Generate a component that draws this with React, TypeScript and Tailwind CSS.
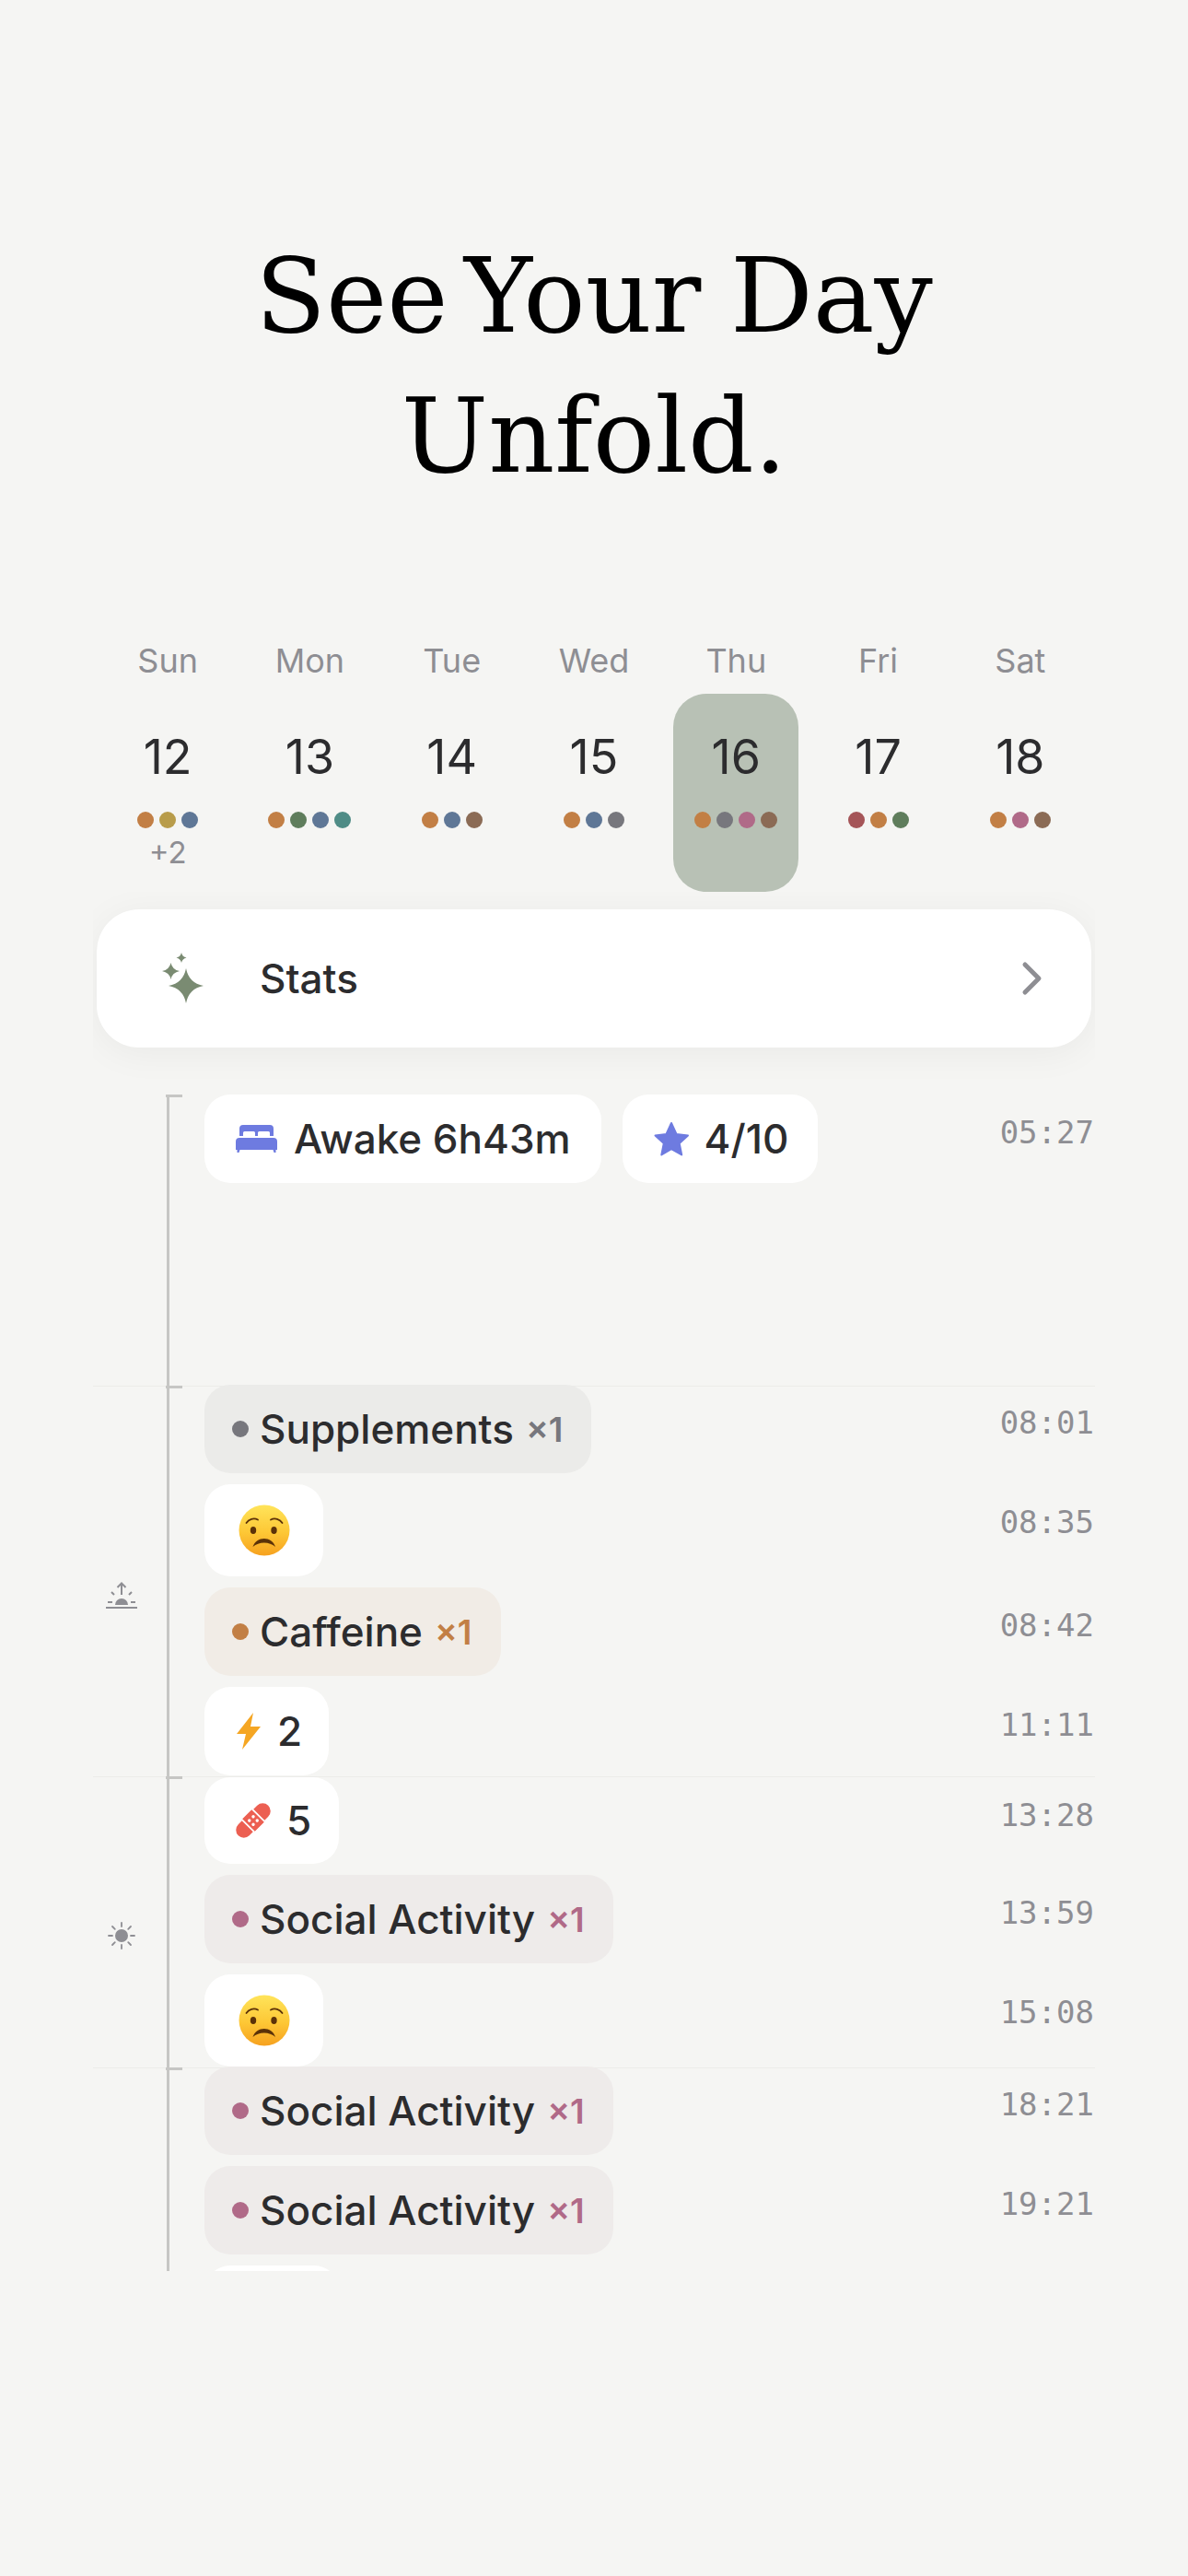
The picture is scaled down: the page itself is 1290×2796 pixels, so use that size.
const days = [
  { label: "Sun", date: 12, dots: ["#c27f45", "#b89c4a", "#5f7796"], more: "+2" },
  { label: "Mon", date: 13, dots: ["#c27f45", "#5f7d5c", "#5f7796", "#4f8c86"] },
  { label: "Tue", date: 14, dots: ["#c27f45", "#5f7796", "#8b6b55"] },
  { label: "Wed", date: 15, dots: ["#c27f45", "#5f7796", "#77777d"] },
  { label: "Thu", date: 16, dots: ["#c27f45", "#77777d", "#b06a88", "#8b6b55"], active: true },
  { label: "Fri", date: 17, dots: ["#a55558", "#c27f45", "#5f7d5c"] },
  { label: "Sat", date: 18, dots: ["#c27f45", "#b06a88", "#8b6b55"] },
];

function Sparkles() {
  return (
    <svg width="46" height="56" viewBox="0 0 46 56" fill="#7a8b72">
      <path d="M26 17Q29 33 45 36 29 39 26 55 23 39 7 36 23 33 26 17z" />
      <path d="M9.500 11Q11 18.500 19 20 11 21.500 9.500 29 8 21.500 0 20 8 18.500 9.500 11z" />
      <path d="M21 0Q22 4.500 26.500 5.500 22 6.500 21 11 20 6.500 15.500 5.500 20 4.500 21 0z" />
    </svg>
  );
}

function Bed() {
  return (
    <svg width="45" height="30" viewBox="0 0 45 30" fill="#6e7be0">
      <path d="M8 0h29a4 4 0 0 1 4 4v8h-4V8.500A1.500 1.500 0 0 0 35.500 7h-10A1.500 1.500 0 0 0 24 8.500V12h-3V8.500A1.500 1.500 0 0 0 19.500 7h-10A1.500 1.500 0 0 0 8 8.500V12H4V4a4 4 0 0 1 4-4z" />
      <path d="M4 14h37a4 4 0 0 1 4 4v9h-1.500v3h-2l-1-3H4.500l-1 3h-2v-3H0v-9a4 4 0 0 1 4-4z" />
    </svg>
  );
}

function Star() {
  return (
    <svg width="40" height="39" viewBox="0 0 40 39" fill="#6e7be0">
      <path d="M20 2l5.500 12 12.500 1.500-9.300 8.500 2.500 12.500L20 30.200 9.300 36.500 11.800 24 2.500 15.500 14.500 14z" strokeLinejoin="round" stroke="#6e7be0" strokeWidth="2" />
    </svg>
  );
}

function Bolt() {
  return (
    <svg width="26" height="40" viewBox="0 0 26 40" fill="#f5a623">
      <path d="M18 0L0 23h10L6 40l20-25H15z" />
    </svg>
  );
}

function Bandage() {
  return (
    <svg width="38" height="38" viewBox="0 0 38 38">
      <g transform="rotate(-45 19 19)">
        <rect x="-4" y="10.500" width="46" height="17" rx="8.500" fill="#ec5f52" />
        <rect x="11" y="8.500" width="16" height="21" fill="#ec5f52" stroke="#fff" strokeWidth="1.800" />
        <circle cx="16" cy="16" r="1.700" fill="#fff" />
        <circle cx="22" cy="16" r="1.700" fill="#fff" />
        <circle cx="16" cy="22" r="1.700" fill="#fff" />
        <circle cx="22" cy="22" r="1.700" fill="#fff" />
      </g>
    </svg>
  );
}

function WorriedFace({ id }: { id: string }) {
  return (
    <svg width="56" height="56" viewBox="0 0 56 56">
      <defs>
        <linearGradient id={id} x1="0" y1="0" x2="0" y2="1">
          <stop offset="0%" stopColor="#ffe45a" />
          <stop offset="55%" stopColor="#fdc735" />
          <stop offset="100%" stopColor="#f6a11f" />
        </linearGradient>
      </defs>
      <circle cx="28" cy="28" r="27.500" fill={`url(#${id})`} />
      <path d="M8.500 20c2.500-4 8-6 12.500-3.500M47.500 20c-2.500-4-8-6-12.500-3.500" fill="none" stroke="#5c3208" strokeWidth="1.800" strokeLinecap="round" />
      <ellipse cx="16" cy="28" rx="3.200" ry="3.900" fill="#5c3208" />
      <ellipse cx="38.500" cy="28" rx="3.200" ry="3.900" fill="#5c3208" />
      <path d="M15.500 46c2-6 7-9 12.300-9s10.300 3 12.300 9c-3.500-3-7.500-4.500-12.300-4.500S19 43 15.500 46z" fill="#5c3208" />
    </svg>
  );
}

function Sunrise() {
  return (
    <svg width="34" height="29" viewBox="0 0 34 29" fill="none" stroke="#8e8e93" strokeWidth="2">
      <path d="M17 14V1.500M12.500 6L17 1.500 21.500 6" />
      <path d="M6 11l3 3M28 11l-3 3M2 22h5M27 22h5" />
      <path d="M10 25a7 7 0 0 1 14 0z" fill="#8e8e93" stroke="none" />
      <path d="M0 28h34" />
    </svg>
  );
}

function Sun() {
  return (
    <svg width="30" height="30" viewBox="0 0 30 30" fill="none" stroke="#8e8e93" strokeWidth="1.800" strokeLinecap="round">
      <circle cx="15" cy="15" r="7" fill="#8e8e93" stroke="none" />
      <path d="M15 1v4M15 25v4M1 15h4M25 15h4M5 5l2.800 2.800M22.200 22.200L25 25M25 5l-2.800 2.800M7.800 22.200L5 25" />
    </svg>
  );
}

function Chip({ className = "", children }: { className?: string; children?: React.ReactNode }) {
  return (
    <div className={`flex items-center rounded-[28px] text-[44px] font-[450] text-[#2c2c2e] ${className}`}>
      {children}
    </div>
  );
}

function Tagged({ name, dot, bg }: { name: string; dot: string; bg: string }) {
  return (
    <Chip className={`h-[96px] pl-[30px] pr-[31px] ${bg}`}>
      <span className={`size-[18px] rounded-full ${dot === "gray" ? "bg-[#77777d]" : dot === "orange" ? "bg-[#c27f45]" : "bg-[#b06a88]"}`} />
      <span className="ml-[12px] leading-none">{name}</span>
      <span className={`ml-[13px] text-[37px] font-semibold leading-none ${dot === "gray" ? "text-[#77777d]" : dot === "orange" ? "text-[#c27f45]" : "text-[#b06a88]"}`}>×1</span>
    </Chip>
  );
}

function Sad({ id }: { id: string }) {
  return (
    <Chip className="h-[100px] w-[129px] justify-center bg-white">
      <WorriedFace id={id} />
    </Chip>
  );
}

function Row({ time, children }: { time?: string; children: React.ReactNode }) {
  return (
    <div className="flex items-start justify-between">
      <div className="flex gap-[23px]">{children}</div>
      {time && (
        <span className="pr-[1px] pt-[21px] font-['DejaVu_Sans_Mono',monospace] text-[34px] leading-[40px] text-[#8e8e93]">{time}</span>
      )}
    </div>
  );
}

function Section({ height, icon, first, shift = "", children }: { height: string; icon?: React.ReactNode; first?: boolean; shift?: string; children: React.ReactNode }) {
  return (
    <section className={`relative flex ${height}`}>
      {!first && <div className="absolute inset-x-0 top-0 h-px bg-[#ecece9]" />}
      <div className="absolute left-[79px] top-0 h-[3px] w-[18px] bg-[#c6c6c4]" />
      <div className="flex w-[80px] items-center justify-center pr-[18px] pt-[30px]">{icon}</div>
      <div className="w-[3px] bg-[#c6c6c4]" />
      <div className={`relative flex flex-1 flex-col gap-[12px] pl-[38px] ${shift}`}>{children}</div>
    </section>
  );
}

export default function App() {
  return (
    <main className="h-[2796px] overflow-hidden bg-[#f5f5f3] font-['Inter',sans-serif]">
      <h1 className="pt-[245px] text-center font-['DejaVu_Serif',serif] text-[112px] font-normal leading-[152px] text-black">
        <span className="-mr-[18px]">See</span> Your <span className="-ml-[4px]">Day</span>
        <br />
        Unfold.
      </h1>

      <div className="mx-[101px] mt-[146px]">
        {/* week strip */}
        <div className="grid grid-cols-7 px-[4px]">
          {days.map((d) => (
            <div key={d.date} className="flex flex-col items-center">
              <span className="text-[36px] leading-[44px] text-[#8e8e93]">{d.label}</span>
              <div className={`mt-[14px] flex h-[215px] w-[136px] flex-col items-center rounded-[36px] pt-[45px] ${d.active ? "bg-[#b8c1b5]" : ""}`}>
                <span className="text-[52px] leading-[48px] text-[#2c2c2e]">{d.date}</span>
                <div className="mt-[35px] flex gap-[6px]">
                  {d.dots.map((c, i) => (
                    <span key={i} className="size-[18px] rounded-full" style={{ backgroundColor: c }} />
                  ))}
                </div>
                {d.more && <span className="mt-[11px] text-[33px] leading-[30px] text-[#8e8e93]">{d.more}</span>}
              </div>
            </div>
          ))}
        </div>

        {/* stats */}
        <div className="overflow-hidden px-[4px] pb-[51px] pt-[19px]">
          <div className="flex h-[150px] items-center rounded-[46px] bg-white pl-[71px] pr-[50px] shadow-[0_6px_40px_rgba(0,0,0,0.05)]">
            <Sparkles />
            <span className="ml-[60px] flex-1 text-[44px] font-[450] text-[#2c2c2e]">Stats</span>
            <svg width="26" height="38" viewBox="0 0 26 38" fill="none" stroke="#8e8e93" strokeWidth="5" strokeLinecap="round" strokeLinejoin="round">
              <path d="M4 4l15 15L4 34" />
            </svg>
          </div>
        </div>

        {/* timeline */}
        <div className="h-[1277px] overflow-hidden">
          <Section height="h-[316px]" first>
            <Row time="05:27">
              <Chip className="h-[96px] gap-[18px] bg-white pl-[34px] pr-[33px]">
                <Bed />
                <span className="leading-none">Awake 6h43m</span>
              </Chip>
              <Chip className="h-[96px] gap-[16px] bg-white pl-[33px] pr-[32px]">
                <Star />
                <span className="leading-none">4/10</span>
              </Chip>
            </Row>
          </Section>

          <Section height="h-[424px]" icon={<Sunrise />} shift="-mt-px">
            <Row time="08:01"><Tagged name="Supplements" dot="gray" bg="bg-[#ebebe9]" /></Row>
            <Row time="08:35"><Sad id="face1" /></Row>
            <Row time="08:42"><Tagged name="Caffeine" dot="orange" bg="bg-[#f1ece6]" /></Row>
            <Row time="11:11">
              <Chip className="h-[96px] gap-[18px] bg-white pl-[35px] pr-[29px]">
                <Bolt />
                <span className="leading-none">2</span>
              </Chip>
            </Row>
          </Section>

          <Section height="h-[316px]" icon={<Sun />} shift="mt-px">
            <Row time="13:28">
              <Chip className="h-[94px] gap-[17px] bg-white pl-[34px] pr-[30px]">
                <Bandage />
                <span className="leading-none">5</span>
              </Chip>
            </Row>
            <Row time="13:59"><Tagged name="Social Activity" dot="pink" bg="bg-[#eeebea]" /></Row>
            <Row time="15:08"><Sad id="face2" /></Row>
          </Section>

          <Section height="h-[316px]" shift="-mt-px">
            <Row time="18:21"><Tagged name="Social Activity" dot="pink" bg="bg-[#eeebea]" /></Row>
            <Row time="19:21"><Tagged name="Social Activity" dot="pink" bg="bg-[#eeebea]" /></Row>
            <Row><Chip className="h-[96px] w-[147px] bg-white" /></Row>
          </Section>
        </div>
      </div>
    </main>
  );
}
